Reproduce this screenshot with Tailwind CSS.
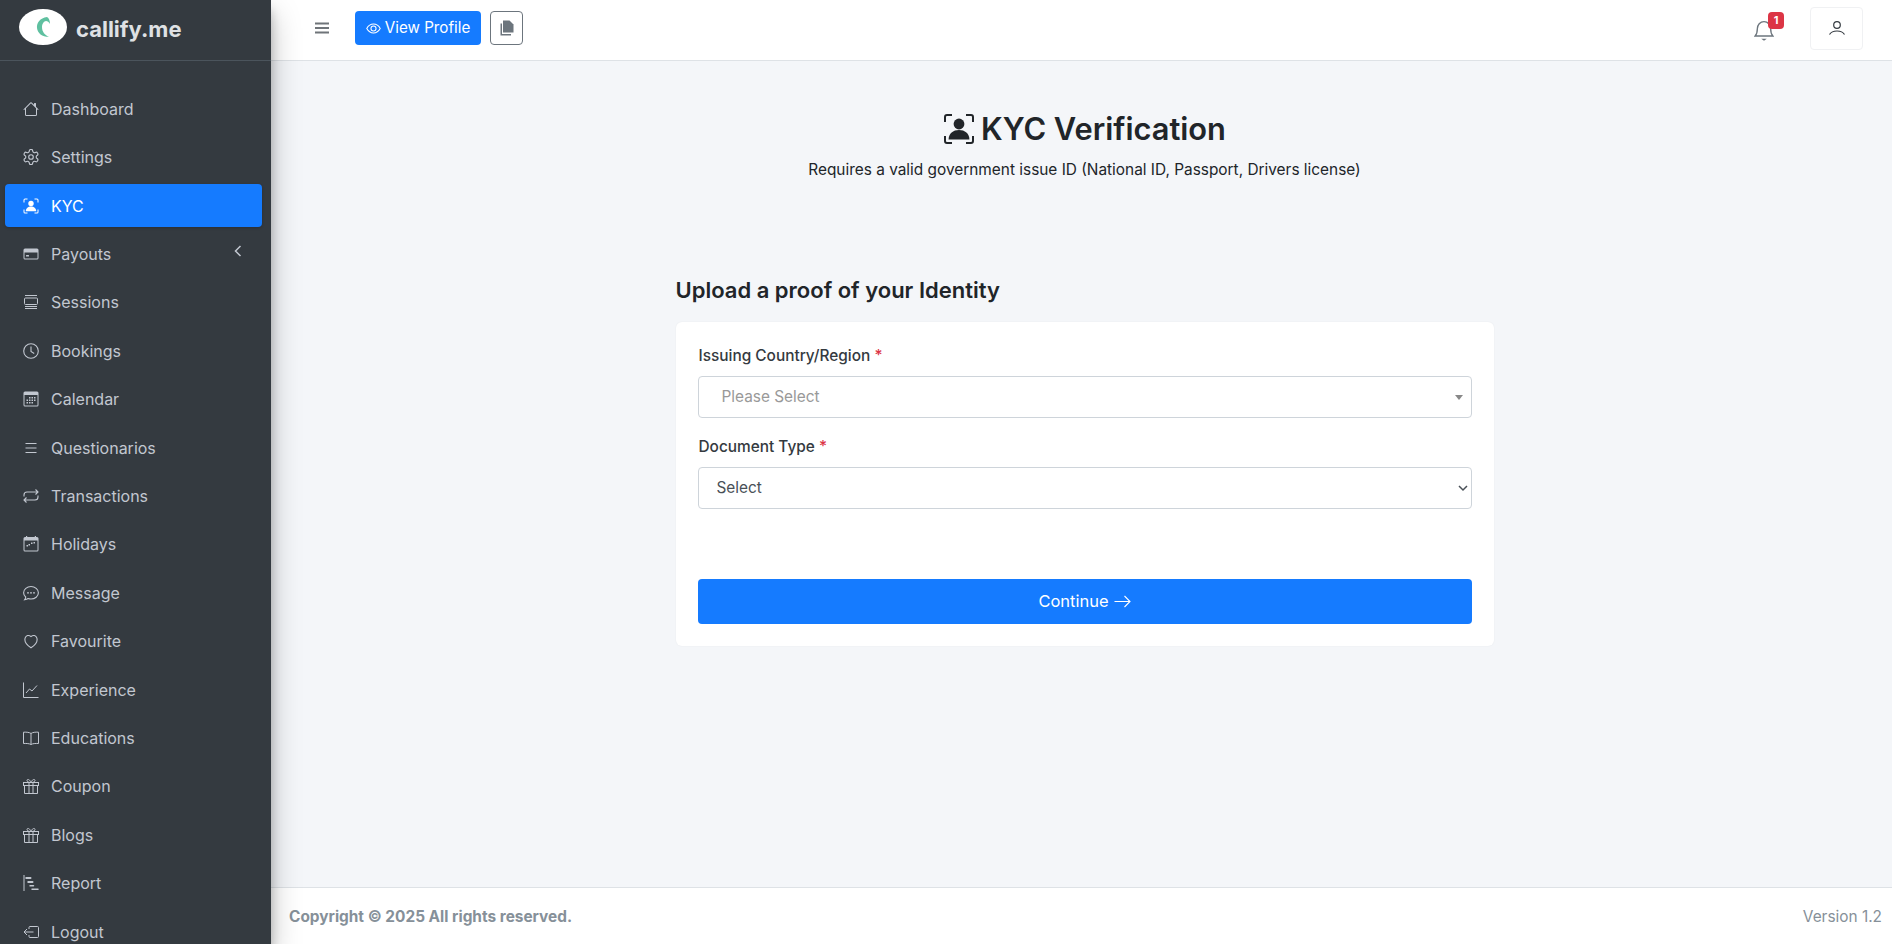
<!DOCTYPE html>
<html lang="en">
<head>
  <meta charset="UTF-8">
  <meta name="viewport" content="width=device-width, initial-scale=1.0">
  <title>KYC Verification</title>
  <script src="https://cdn.jsdelivr.net/npm/@tailwindcss/browser@4"></script>
</head>
<body class="h-[944px] overflow-hidden bg-[#f4f6f9] font-['Inter',sans-serif] text-[#212529]">
<div class="flex h-[944px]">

  <!-- sidebar -->
  <aside class="relative z-10 w-[271px] h-[944px] shrink-0 overflow-hidden bg-[#343a40] shadow-[0_14px_28px_rgba(0,0,0,.25),0_10px_10px_rgba(0,0,0,.22)]">
    <div class="flex items-center h-[61px] pl-[19px] border-b border-[#4b545c]">
      <div class="flex items-center justify-center mb-[6px] w-[48px] h-[36px] rounded-[50%] bg-white">
        <svg width="16" height="22" viewBox="0 0 16 22"><path d="M12 1C5 2 1.500 7 2 12c.5 5 5 9 12 9-4-2-7-5-7-10 0-3 2-6 4-6 1.500 0 3 1 4 3 0-3-1-6-3-7z" fill="#5fc0a0"/></svg>
      </div>
      <span class="ml-[9px] mb-[2px] text-[22px] font-bold leading-none text-[#dfe1e4]">callify.me</span>
    </div>

    <nav class="pt-[26.2px] text-[16px] text-[#c2c7d0]">
      <a class="flex items-center h-[43.4px] mb-[5px] ml-[5px] w-[257px] pl-[18px] gap-[12px] rounded-[4px]">
        <svg class="w-4 h-4" viewBox="0 0 16 16" fill="currentColor"><path d="M8.707 1.5a1 1 0 0 0-1.414 0L.646 8.146a.5.5 0 0 0 .708.708L2 8.207V13.5A1.5 1.5 0 0 0 3.5 15h9a1.5 1.5 0 0 0 1.5-1.5V8.207l.646.647a.5.5 0 0 0 .708-.708L13 5.793V2.5a.5.5 0 0 0-.5-.5h-1a.5.5 0 0 0-.5.5v1.293zM13 7.207V13.5a.5.5 0 0 1-.5.5h-9a.5.5 0 0 1-.5-.5V7.207l5-5z"/></svg>
        Dashboard
      </a>
      <a class="flex items-center h-[43.4px] mb-[5px] ml-[5px] w-[257px] pl-[18px] gap-[12px] rounded-[4px]">
        <svg class="w-4 h-4" viewBox="1.5 1.5 21 21" fill="none" stroke="currentColor" stroke-width="1.5"><path d="M12.22 2h-.44a2 2 0 0 0-2 2v.18a2 2 0 0 1-1 1.73l-.43.25a2 2 0 0 1-2 0l-.15-.08a2 2 0 0 0-2.73.73l-.22.38a2 2 0 0 0 .73 2.73l.15.1a2 2 0 0 1 1 1.72v.51a2 2 0 0 1-1 1.74l-.15.09a2 2 0 0 0-.73 2.73l.22.38a2 2 0 0 0 2.73.73l.15-.08a2 2 0 0 1 2 0l.43.25a2 2 0 0 1 1 1.73V20a2 2 0 0 0 2 2h.44a2 2 0 0 0 2-2v-.18a2 2 0 0 1 1-1.73l.43-.25a2 2 0 0 1 2 0l.15.08a2 2 0 0 0 2.73-.73l.22-.39a2 2 0 0 0-.73-2.73l-.15-.08a2 2 0 0 1-1-1.74v-.5a2 2 0 0 1 1-1.74l.15-.09a2 2 0 0 0 .73-2.73l-.22-.38a2 2 0 0 0-2.73-.73l-.15.08a2 2 0 0 1-2 0l-.43-.25a2 2 0 0 1-1-1.73V4a2 2 0 0 0-2-2z"/><circle cx="12" cy="12" r="3"/></svg>
        Settings
      </a>
      <a class="flex items-center h-[43.4px] mb-[5px] ml-[5px] w-[257px] pl-[18px] gap-[12px] rounded-[4px] bg-[#157bff] text-white shadow-[0_1px_3px_rgba(0,0,0,.2)]">
        <svg class="w-4 h-4" viewBox="0 0 16 16" fill="currentColor"><path d="M.5 4.500V2A1.500 1.500 0 0 1 2 .5h2.500v1H2a.5.5 0 0 0-.5.5v2.500zM11.500.5H14A1.500 1.500 0 0 1 15.500 2v2.500h-1V2a.5.5 0 0 0-.5-.5h-2.500zM.5 11.500h1V14a.5.5 0 0 0 .5.5h2.500v1H2A1.500 1.500 0 0 1 .5 14zM14.500 11.500h1V14a1.500 1.500 0 0 1-1.500 1.500h-2.500v-1H14a.5.5 0 0 0 .5-.5z"/><circle cx="8" cy="5.500" r="2.700"/><path d="M2.800 13.200c0-3 2.300-4.700 5.200-4.700s5.200 1.700 5.200 4.700z"/></svg>
        KYC
      </a>
      <a class="relative flex items-center h-[43.4px] mb-[5px] ml-[5px] w-[257px] pl-[18px] gap-[12px] rounded-[4px]">
        <svg class="w-4 h-4" viewBox="0 0 16 16" fill="currentColor"><path d="M2 2.500A1.500 1.500 0 0 0 .5 4v8A1.500 1.500 0 0 0 2 13.500h12a1.500 1.500 0 0 0 1.500-1.500V4A1.500 1.500 0 0 0 14 2.500zm-.5 4h13V12a.5.5 0 0 1-.5.5H2a.5.5 0 0 1-.5-.5z"/><rect x="3" y="9" width="3" height="1.600" rx=".4"/></svg>
        Payouts
        <svg class="absolute right-[18px] top-[12px] w-[12px] h-[14px]" viewBox="0 0 12 14" fill="none" stroke="currentColor" stroke-width="1.500"><path d="M8.500 2 3.500 7l5 5"/></svg>
      </a>
      <a class="flex items-center h-[43.4px] mb-[5px] ml-[5px] w-[257px] pl-[18px] gap-[12px] rounded-[4px]">
        <svg class="w-4 h-4" viewBox="0 0 16 16" fill="none" stroke="currentColor"><path d="M2 1.500h12M2 14.500h12M2 12.500h12"/><rect x="1.500" y="4" width="13" height="6.500" rx="1"/></svg>
        Sessions
      </a>
      <a class="flex items-center h-[43.4px] mb-[5px] ml-[5px] w-[257px] pl-[18px] gap-[12px] rounded-[4px]">
        <svg class="w-4 h-4" viewBox="0 0 16 16" fill="none" stroke="currentColor" stroke-width="1.100"><circle cx="8" cy="8" r="7.300"/><path d="M8 3.500V8.500l3.200 2"/></svg>
        Bookings
      </a>
      <a class="flex items-center h-[43.4px] mb-[5px] ml-[5px] w-[257px] pl-[18px] gap-[12px] rounded-[4px]">
        <svg class="w-4 h-4" viewBox="0 0 16 16" fill="currentColor"><path d="M2 .5A1.500 1.500 0 0 0 .5 2v12A1.500 1.500 0 0 0 2 15.500h12a1.500 1.500 0 0 0 1.500-1.500V2A1.500 1.500 0 0 0 14 .5zM1.500 4h13v10a.5.5 0 0 1-.5.5H2a.5.5 0 0 1-.5-.5z"/><path d="M6 6h1.500v1.500H6zM8.500 6H10v1.500H8.500zM11 6h1.500v1.500H11zM3.500 8.500H5V10H3.500zM6 8.500h1.500V10H6zM8.500 8.500H10V10H8.500zM11 8.500h1.500V10H11zM3.500 11H5v1.500H3.500zM6 11h1.500v1.500H6zM8.500 11H10v1.500H8.500z"/></svg>
        Calendar
      </a>
      <a class="flex items-center h-[43.4px] mb-[5px] ml-[5px] w-[257px] pl-[18px] gap-[12px] rounded-[4px]">
        <svg class="w-4 h-4" viewBox="0 0 16 16" fill="none" stroke="currentColor"><path d="M2.500 3.500h11M2.500 8h11M2.500 12.500h11"/></svg>
        Questionarios
      </a>
      <a class="flex items-center h-[43.4px] mb-[5px] ml-[5px] w-[257px] pl-[18px] gap-[12px] rounded-[4px]">
        <svg class="w-4 h-4" viewBox="0 0 16 16" fill="none" stroke="currentColor" stroke-width="1.100"><path d="M1 8.500V7a3 3 0 0 1 3-3h10.500M12.500 1.500 15 4l-2.500 2.500M15 7.500V9a3 3 0 0 1-3 3H1.500M3.500 9.500 1 12l2.500 2.500"/></svg>
        Transactions
      </a>
      <a class="flex items-center h-[43.4px] mb-[5px] ml-[5px] w-[257px] pl-[18px] gap-[12px] rounded-[4px]">
        <svg class="w-4 h-4" viewBox="0 0 16 16" fill="currentColor"><path d="M3 0h1.200v1H11.800V0H13v1h1a1.500 1.500 0 0 1 1.500 1.500V14A1.500 1.500 0 0 1 14 15.500H2A1.500 1.500 0 0 1 .5 14V2.500A1.500 1.500 0 0 1 2 1h1zM1.500 4.500V14a.5.5 0 0 0 .5.5h12a.5.5 0 0 0 .5-.5V4.500z"/><path d="M10.500 6H12v1.500h-1.500zM8 6.500h1.500V8H8zM5.500 8H7v1.500H5.500zM3.500 9H5v1.500H3.500z"/></svg>
        Holidays
      </a>
      <a class="flex items-center h-[43.4px] mb-[5px] ml-[5px] w-[257px] pl-[18px] gap-[12px] rounded-[4px]">
        <svg class="w-4 h-4" viewBox="0 0 16 16" fill="none" stroke="currentColor" stroke-width="1.100"><path d="M8 1.500c4 0 7.400 2.800 7.400 6.300S12 14 8 14c-1 0-2-.2-2.900-.5-.8.600-2 1-3.400 1.200.6-.8 1-1.800 1-2.700C1.300 10.800.6 9.400.6 7.800.6 4.300 4 1.500 8 1.500z"/><circle cx="5" cy="7.800" r=".9" fill="currentColor" stroke="none"/><circle cx="8" cy="7.800" r=".9" fill="currentColor" stroke="none"/><circle cx="11" cy="7.800" r=".9" fill="currentColor" stroke="none"/></svg>
        Message
      </a>
      <a class="flex items-center h-[43.4px] mb-[5px] ml-[5px] w-[257px] pl-[18px] gap-[12px] rounded-[4px]">
        <svg class="w-4 h-4" viewBox="0 0 16 16" fill="none" stroke="currentColor" stroke-width="1.100"><path d="M8 14.800C-3 7.500 3.500-.5 8 3.600c4.500-4.100 11 3.900 0 11.200z"/></svg>
        Favourite
      </a>
      <a class="flex items-center h-[43.4px] mb-[5px] ml-[5px] w-[257px] pl-[18px] gap-[12px] rounded-[4px]">
        <svg class="w-4 h-4" viewBox="0 0 16 16" fill="none" stroke="currentColor"><path d="M.5.500v15h15"/><path d="M3 11l3.500-4 2.500 2 5-5.500"/></svg>
        Experience
      </a>
      <a class="flex items-center h-[43.4px] mb-[5px] ml-[5px] w-[257px] pl-[18px] gap-[12px] rounded-[4px]">
        <svg class="w-4 h-4" viewBox="0 0 16 16" fill="none" stroke="currentColor"><path d="M8 3.500C6.500 2.300 3.500 2 .5 2.200V13.500c3-.2 6 .1 7.500 1 1.500-.9 4.500-1.200 7.500-1V2.200C12.500 2 9.500 2.300 8 3.500zM8 3.500v11"/></svg>
        Educations
      </a>
      <a class="flex items-center h-[43.4px] mb-[5px] ml-[5px] w-[257px] pl-[18px] gap-[12px] rounded-[4px]">
        <svg class="w-4 h-4" viewBox="0 0 16 16" fill="none" stroke="currentColor"><rect x=".5" y="4.500" width="15" height="3"/><path d="M1.500 7.500v8h13v-8M6 4.500v11M10 4.500v11M8 4.500C6 4.500 4 3.800 4 2.500 4 1 6.500.7 8 4.500c1.500-3.800 4-3.500 4-2 0 1.300-2 2-4 2z"/></svg>
        Coupon
      </a>
      <a class="flex items-center h-[43.4px] mb-[5px] ml-[5px] w-[257px] pl-[18px] gap-[12px] rounded-[4px]">
        <svg class="w-4 h-4" viewBox="0 0 16 16" fill="none" stroke="currentColor"><rect x=".5" y="4.500" width="15" height="3"/><path d="M1.500 7.500v8h13v-8M6 4.500v11M10 4.500v11M8 4.500C6 4.500 4 3.800 4 2.500 4 1 6.500.7 8 4.500c1.500-3.800 4-3.500 4-2 0 1.300-2 2-4 2z"/></svg>
        Blogs
      </a>
      <a class="flex items-center h-[43.4px] mb-[5px] ml-[5px] w-[257px] pl-[18px] gap-[12px] rounded-[4px]">
        <svg class="w-4 h-4" viewBox="0 0 16 16" fill="currentColor"><path d="M.5 0h1v16h-1z"/><path d="M2.500 2h5a.5.5 0 0 1 0 2h-5zM4.500 6h5a.5.5 0 0 1 0 2h-5zM6.500 10h4a.5.5 0 0 1 0 1.500h-4zM8.500 13.500h6.500a.5.5 0 0 1 0 1.500H8.500z"/></svg>
        Report
      </a>
      <a class="flex items-center h-[43.4px] mb-[5px] ml-[5px] w-[257px] pl-[18px] gap-[12px] rounded-[4px]">
        <svg class="w-4 h-4" viewBox="0 0 16 16" fill="none" stroke="currentColor"><path d="M6 5V3.500a1 1 0 0 1 1-1h7.500a1 1 0 0 1 1 1v9a1 1 0 0 1-1 1H7a1 1 0 0 1-1-1V11M10.500 8H1M4 5 1 8l3 3"/></svg>
        Logout
      </a>
    </nav>
  </aside>

  <!-- main column -->
  <div class="flex flex-col flex-1 h-[944px] min-w-0">
    <header class="flex items-center h-[61px] shrink-0 bg-white border-b border-[#dee2e6] pr-[29px] pb-[4px]">
      <svg class="ml-[44px] w-[14px] h-[12px] text-[#6f7479]" viewBox="0 0 14 12" fill="currentColor"><path d="M0 .5h14v2H0zM0 5h14v2H0zM0 9.500h14v2H0z"/></svg>
      <a class="flex items-center gap-[4px] ml-[26px] h-[34px] w-[126px] justify-center rounded-[4px] bg-[#157bff] text-white text-[15.2px]">
        <svg class="w-[15px] h-[15px]" viewBox="0 0 16 16" fill="none" stroke="currentColor" stroke-width="1.100"><path d="M.8 8C2.500 5 5 3.300 8 3.300S13.500 5 15.200 8c-1.700 3-4.200 4.700-7.200 4.700S2.500 11 .8 8z"/><circle cx="8" cy="8" r="2.700"/></svg>
        View Profile
      </a>
      <button class="flex items-center justify-center ml-[9px] w-[33px] h-[34px] rounded-[4px] border border-[#6c757d] text-[#6c757d]">
        <svg class="w-[14px] h-[16px]" viewBox="0 0 14 15" fill="currentColor"><path d="M3 0h6.500L13.500 4v8H3z"/><path d="M.5 3H2v10.500h9V15H.5z"/></svg>
      </button>
      <div class="relative ml-auto mr-[37px] mt-[6px] w-[18px] h-[22px]">
        <svg class="-ml-[1px] w-[20px] h-[22px] text-[#6c757d]" viewBox="0 2.500 18 19" fill="none" stroke="currentColor" stroke-width="1.200"><path d="M1 16.500c1.500-1.500 2-3 2-6.500 0-3.500 2.500-6.500 6-6.500s6 3 6 6.500c0 3.500.5 5 2 6.500z"/><path d="M6.500 19h5l-2.500 1.800z" fill="currentColor" stroke="none"/></svg>
        <span class="absolute left-[13px] top-[-8px] flex items-center justify-center w-[16px] h-[17px] rounded-[4px] bg-[#dc3545] text-white text-[11px] font-bold leading-none">1</span>
      </div>
      <button class="flex items-center justify-center w-[53px] h-[43px] rounded-[4px] border border-[#f0f1f3]">
        <svg class="w-[18px] h-[18px] text-[#343a40]" viewBox="0 0 18 18" fill="none" stroke="currentColor" stroke-width="1.200"><circle cx="9" cy="6" r="3.300"/><path d="M1.500 15.500C3 13 5.500 12 9 12s6 1 7.500 3.500"/></svg>
      </button>
    </header>

    <main class="flex-1 pl-[6px]">
      <div class="flex flex-col items-center pt-[48px]">
        <h1 class="flex items-center gap-[6px] h-[40px] text-[30.8px] font-semibold leading-none text-[#212529]">
          <svg class="w-[32px] h-[32px]" viewBox="0 0 16 16" fill="currentColor"><path d="M.5 4.500V2A1.500 1.500 0 0 1 2 .5h2.500v1H2a.5.5 0 0 0-.5.5v2.500zM11.500.5H14A1.500 1.500 0 0 1 15.500 2v2.500h-1V2a.5.5 0 0 0-.5-.5h-2.500zM.5 11.500h1V14a.5.5 0 0 0 .5.5h2.500v1H2A1.500 1.500 0 0 1 .5 14zM14.500 11.500h1V14a1.500 1.500 0 0 1-1.500 1.500h-2.500v-1H14a.5.5 0 0 0 .5-.5z"/><circle cx="8" cy="5.500" r="2.700"/><path d="M2.800 13.200c0-3 2.300-4.700 5.200-4.700s5.200 1.700 5.200 4.700z"/></svg>
          KYC Verification
        </h1>
        <p class="mt-[10px] text-[15.4px] leading-[22px]">Requires a valid government issue ID (National ID, Passport, Drivers license)</p>
      </div>

      <section class="w-[818px] mx-auto mt-[93px]">
        <h2 class="h-[32px] text-[22px] font-semibold leading-[32px]">Upload a proof of your Identity</h2>
        <div class="mt-[16px] h-[324px] rounded-[6px] bg-white px-[22px] pt-[22px] shadow-[0_0_2px_rgba(0,0,0,.06)]">
          <label class="block ml-[1px] h-[24px] text-[15.4px] font-medium leading-[24px] text-[#343a40]">Issuing Country/Region <span class="text-[#dc3545]">*</span></label>
          <div class="relative mt-[8px] flex items-center h-[42px] rounded-[4px] border border-[#ced4da] pl-[23px] text-[15.4px] text-[#999]">
            Please Select
            <span class="absolute right-[8px] top-[18px] border-x-[4px] border-t-[5px] border-x-transparent border-t-[#888]"></span>
          </div>
          <label class="block ml-[1px] mt-[17px] h-[24px] text-[15.4px] font-medium leading-[24px] text-[#343a40]">Document Type <span class="text-[#dc3545]">*</span></label>
          <div class="relative mt-[8px]">
            <select class="block w-full h-[42px] appearance-none rounded-[4px] border border-[#ced4da] bg-white pl-[18px] text-[15.4px] text-[#495057]">
              <option>Select</option>
            </select>
            <svg class="absolute right-[4px] top-[17px] w-[10px] h-[8px] text-[#495057]" viewBox="0 0 10 8" fill="none" stroke="currentColor" stroke-width="1.500"><path d="M1 2l4 4 4-4"/></svg>
          </div>
          <button class="flex items-center justify-center gap-[5px] mt-[70px] w-full h-[45px] rounded-[4px] bg-[#157bff] text-white text-[16.5px]">
            Continue
            <svg class="w-[17px] h-[13px]" viewBox="0 0 17 13" fill="none" stroke="currentColor" stroke-width="1.100"><path d="M.5 6.500h15M10.500 1l5.500 5.500-5.500 5.500"/></svg>
          </button>
        </div>
      </section>
    </main>

    <footer class="flex items-center justify-between h-[57px] shrink-0 bg-white border-t border-[#dee2e6] pl-[18px] pr-[10px] pt-[1px] text-[#869099] text-[15.4px]">
      <span class="font-bold">Copyright © 2025 All rights reserved.</span>
      <span>Version 1.2</span>
    </footer>
  </div>
</div>
</body>
</html>
